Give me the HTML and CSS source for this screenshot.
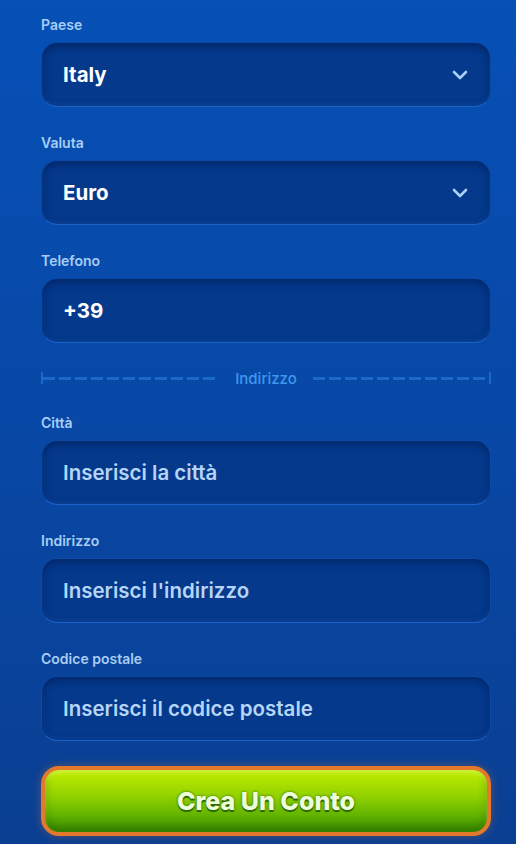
FILE: index.html
```html
<!DOCTYPE html>
<html lang="it">
<head>
    <meta charset="UTF-8">
    <meta name="viewport" content="width=device-width, initial-scale=1.0">
    <title>Registrazione</title>
    <link rel="stylesheet" href="styles.css">
</head>
<body>
    <form class="signup">
        <div class="field">
            <label class="field-label">Paese</label>
            <div class="box select">
                <span class="value">Italy</span>
                <svg class="chevron" width="16" height="10" viewBox="0 0 16 10"><path d="M2 2l6 6 6-6" fill="none" stroke="#a9d0f7" stroke-width="2.6" stroke-linecap="round" stroke-linejoin="round"/></svg>
            </div>
        </div>

        <div class="field">
            <label class="field-label">Valuta</label>
            <div class="box select">
                <span class="value">Euro</span>
                <svg class="chevron" width="16" height="10" viewBox="0 0 16 10"><path d="M2 2l6 6 6-6" fill="none" stroke="#a9d0f7" stroke-width="2.6" stroke-linecap="round" stroke-linejoin="round"/></svg>
            </div>
        </div>

        <div class="field">
            <label class="field-label">Telefono</label>
            <div class="box">
                <span class="value">+39</span>
            </div>
        </div>

        <div class="divider">
            <span class="dash left"></span>
            <span class="divider-text">Indirizzo</span>
            <span class="dash right"></span>
        </div>

        <div class="field">
            <label class="field-label">Città</label>
            <div class="box">
                <span class="placeholder">Inserisci la città</span>
            </div>
        </div>

        <div class="field">
            <label class="field-label">Indirizzo</label>
            <div class="box">
                <span class="placeholder">Inserisci l'indirizzo</span>
            </div>
        </div>

        <div class="field">
            <label class="field-label">Codice postale</label>
            <div class="box">
                <span class="placeholder">Inserisci il codice postale</span>
            </div>
        </div>

        <button type="button" class="submit">Crea Un Conto</button>
    </form>
</body>
</html>
```

FILE: styles.css
```css
body {
	margin: 0;
	padding: 0;
	font-family: Inter, "Noto Sans", sans-serif;
	background: linear-gradient(180deg, #0650b6 0%, #0848a6 50%, #0a3f92 100%);
	min-height: 844px;
	overflow: hidden;
}

.signup {
	padding: 16px 25px 0 41px;
	display: flex;
	flex-direction: column;
}

.field {
	display: flex;
	flex-direction: column;
	margin-bottom: 27px;
}

.field-label {
	color: #a7cdf5;
	font-size: 14px;
	font-weight: 600;
	line-height: 18px;
	margin-bottom: 8px;
}

.box {
	height: 65px;
	box-sizing: border-box;
	border-radius: 16px;
	background: #04398c;
	border: 1px solid #0b4aa6;
	border-bottom-color: #1b63c9;
	box-shadow: inset 0 3px 8px rgba(0, 20, 70, 0.55), inset 0 -2px 4px rgba(40, 110, 210, 0.25);
	display: flex;
	align-items: center;
	justify-content: space-between;
	padding: 0 22px 0 21px;
}

.value {
	color: #ffffff;
	font-size: 20.5px;
	font-weight: 700;
}

.placeholder {
	color: #b6d5f6;
	font-size: 20.5px;
	font-weight: 600;
}

.chevron {
	display: block;
	margin-top: 1px;
}

.divider {
	display: flex;
	align-items: center;
	gap: 16px;
	height: 20px;
	margin: -2px 0 26px 0;
}

.dash {
	flex: 1;
	height: 12px;
	background: repeating-linear-gradient(90deg, #1c69cc 0 12px, transparent 12px 16px) left center / 100% 3px no-repeat;
}

.dash.left {
	border-left: 2px solid #1c69cc;
}

.dash.right {
	border-right: 2px solid #1c69cc;
}

.divider-text {
	color: #3f97ec;
	font-size: 15px;
	font-weight: 500;
}

.submit {
	margin-top: -2px;
	height: 70px;
	border-radius: 18px;
	border: 4px solid #e5792b;
	background: linear-gradient(180deg, #c2ec00 0%, #96d400 40%, #58ac00 80%, #3f9400 100%);
	box-shadow: 0 0 10px rgba(232, 120, 40, 0.35), inset 0 -6px 8px rgba(30, 90, 0, 0.45), inset 0 3px 4px rgba(230, 255, 120, 0.5);
	color: #eefdd9;
	font-family: inherit;
	font-size: 25px;
	font-weight: 800;
	text-shadow: 0 2px 0 #2d6a06, 0 0 3px #2d6a06;
	cursor: pointer;
}
```
